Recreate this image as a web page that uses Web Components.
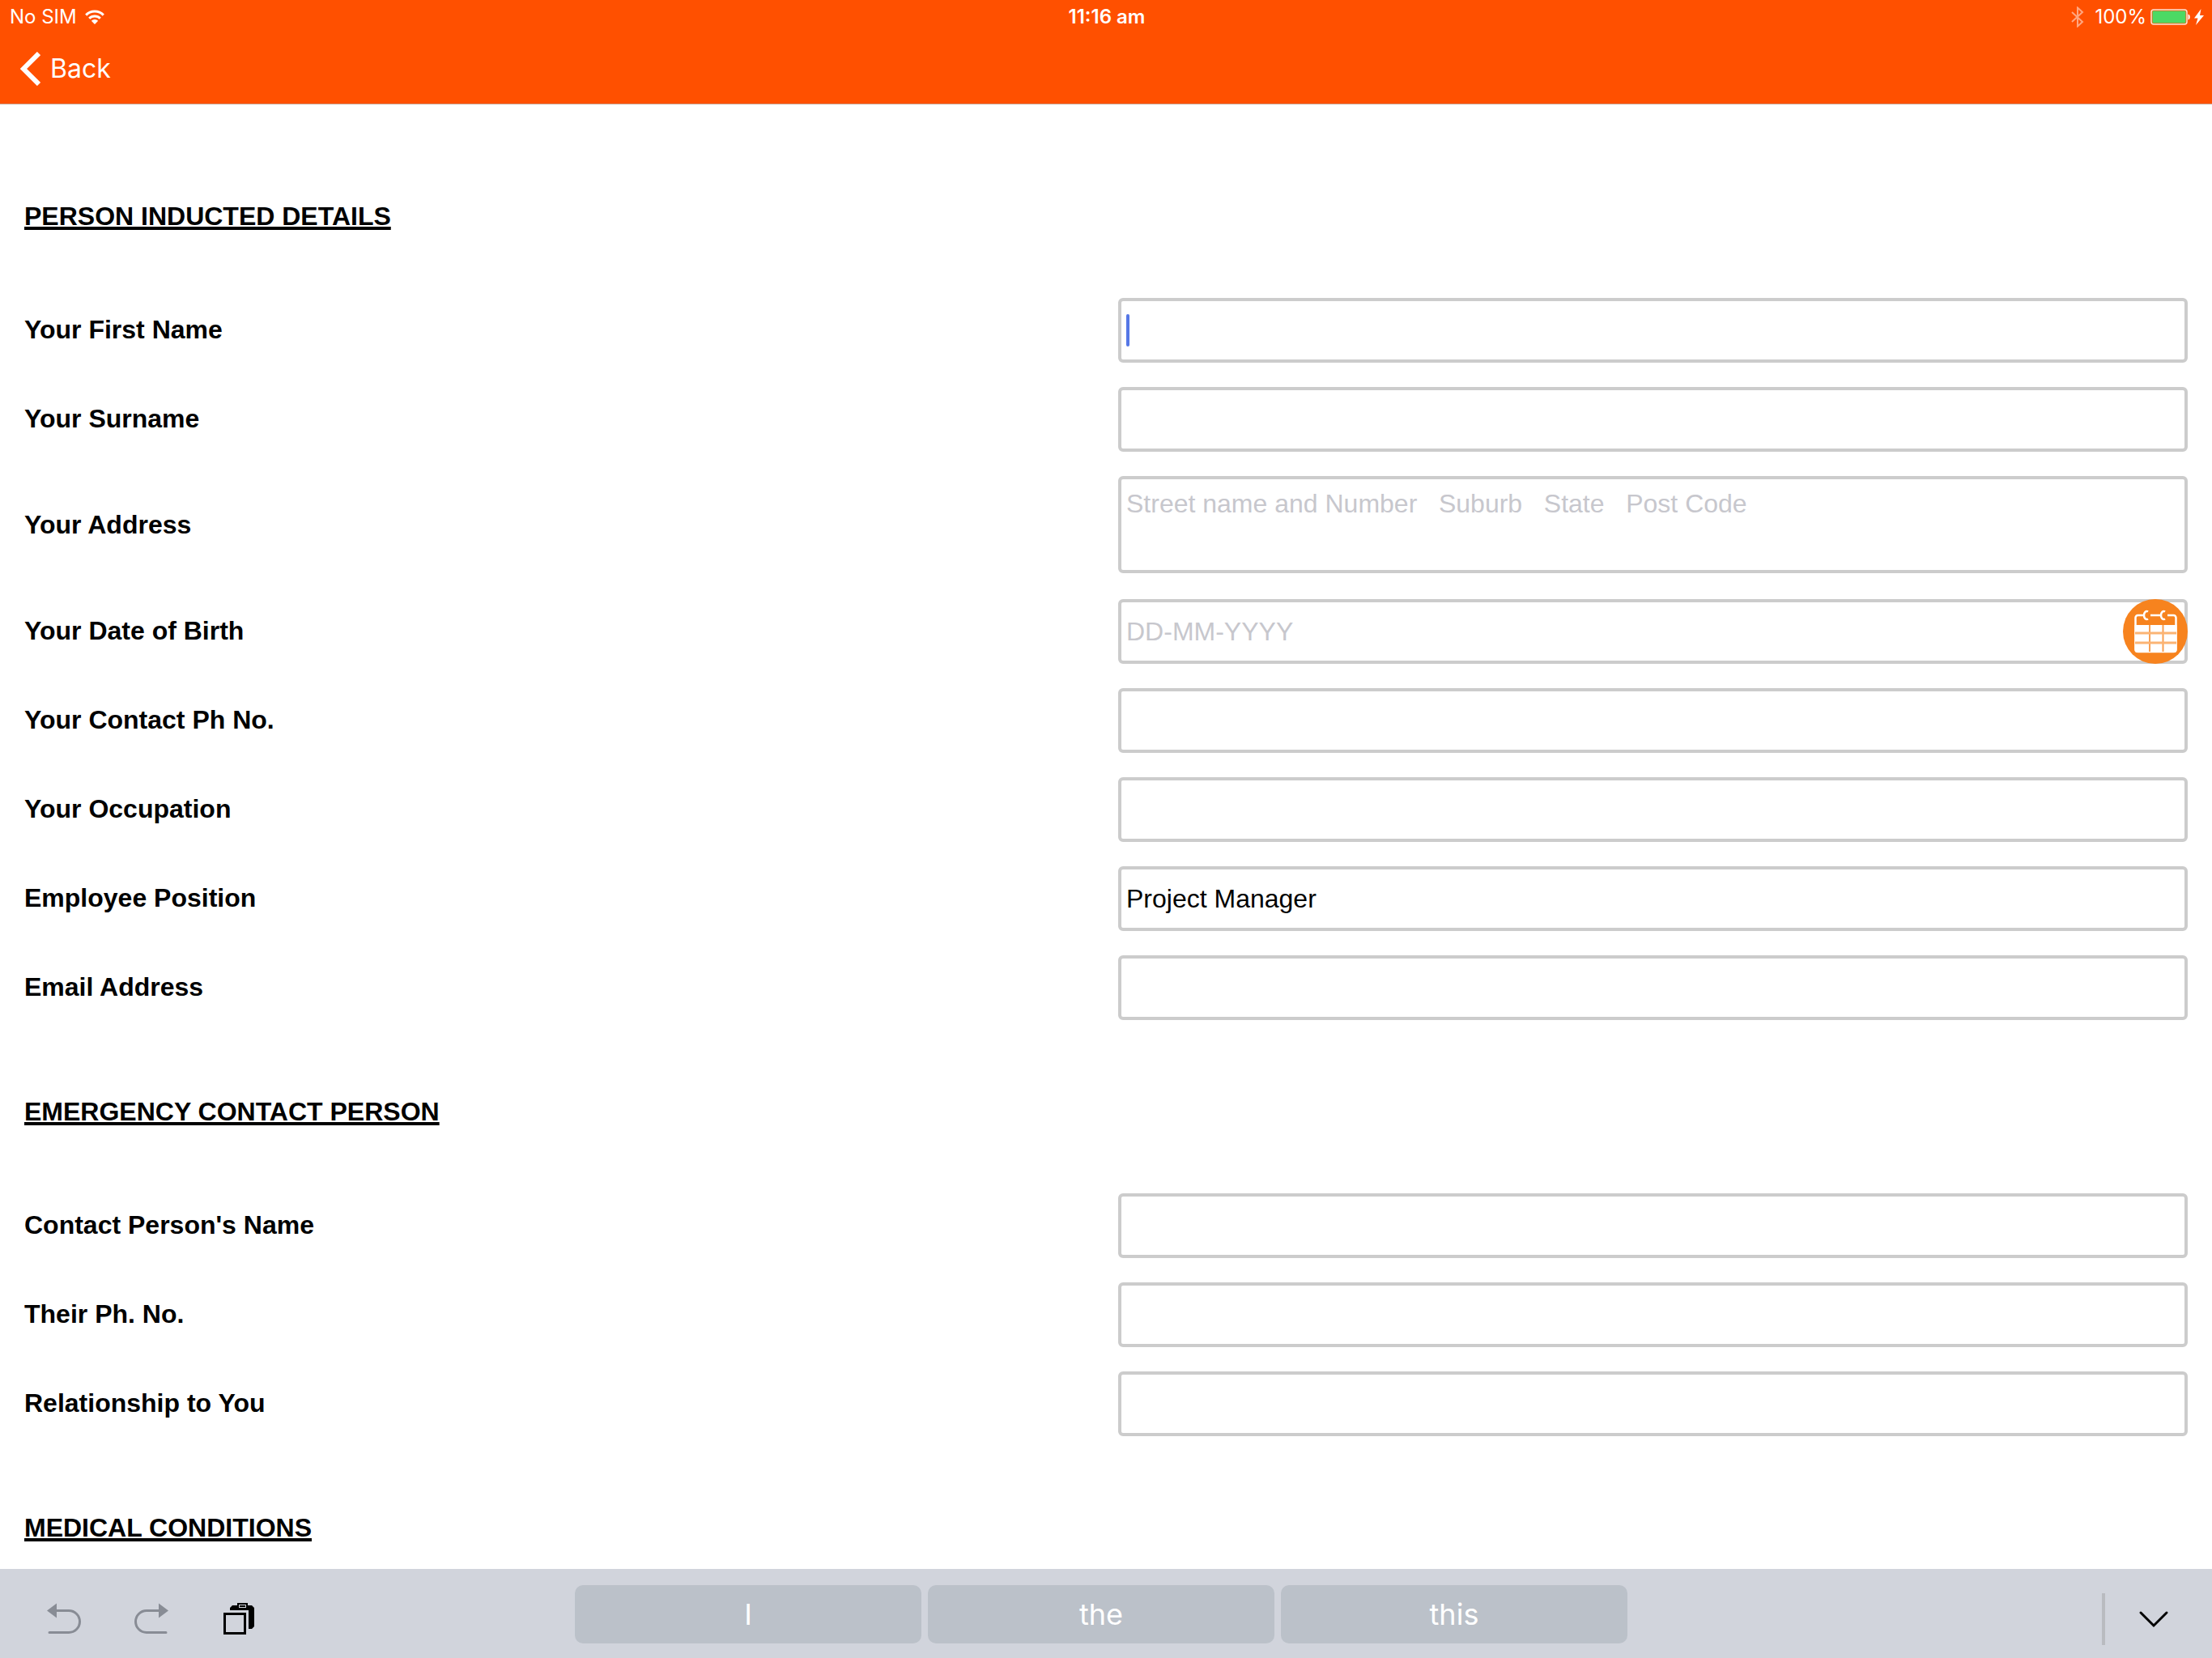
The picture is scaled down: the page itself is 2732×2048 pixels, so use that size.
<!DOCTYPE html>
<html lang="en">
<head>
<meta charset="utf-8">
<meta name="viewport" content="width=device-width, initial-scale=1">
<title>Person Inducted Details</title>
<style>
  html, body { margin: 0; height: 100%; background: #fff; }
  body { font-family: "Liberation Sans", Arial, sans-serif; font-size: 32px; color: #000; }
</style>
</head>
<body>
<induction-page>
  <status-bar slot="header" carrier="No SIM" time="11:16 am" battery="100%"></status-bar>
  <nav-bar slot="header">Back</nav-bar>
  <form-section heading="PERSON INDUCTED DETAILS">
    <form-field label="Your First Name" active></form-field>
    <form-field label="Your Surname"></form-field>
    <form-field label="Your Address" type="textarea" placeholder="Street name and Number   Suburb   State   Post Code"></form-field>
    <form-field label="Your Date of Birth" type="date" placeholder="DD-MM-YYYY"></form-field>
    <form-field label="Your Contact Ph No."></form-field>
    <form-field label="Your Occupation"></form-field>
    <form-field label="Employee Position" type="select" value="Project Manager"></form-field>
    <form-field label="Email Address"></form-field>
  </form-section>
  <form-section heading="EMERGENCY CONTACT PERSON">
    <form-field label="Contact Person's Name"></form-field>
    <form-field label="Their Ph. No."></form-field>
    <form-field label="Relationship to You"></form-field>
  </form-section>
  <form-section heading="MEDICAL CONDITIONS"></form-section>
  <keyboard-bar slot="footer">
    <word-suggestion>I</word-suggestion>
    <word-suggestion>the</word-suggestion>
    <word-suggestion>this</word-suggestion>
  </keyboard-bar>
</induction-page>

<script>
class BaseElement extends HTMLElement {
  connectedCallback() {
    if (this.shadowRoot) return;
    this.attachShadow({ mode: "open" }).innerHTML =
      `<style>:host,*{box-sizing:border-box}svg{display:block;flex:none}</style>` + this.render();
  }
  attr(name) { return this.getAttribute(name) || ""; }
}

customElements.define("induction-page", class extends BaseElement {
  render() {
    return `<style>
      :host { display: flex; flex-direction: column; height: 100vh; }
      header { flex: none; background: #ff5000; color: #fff; border-bottom: 1px solid #c9a595; font-family: Inter, sans-serif; }
      main { flex: 1; min-height: 0; overflow: auto; scrollbar-width: none; padding: 25px 15px 0; }
      footer { flex: none; }
    </style>
    <header><slot name="header"></slot></header>
    <main><slot></slot></main>
    <footer><slot name="footer"></slot></footer>`;
  }
});

customElements.define("status-bar", class extends BaseElement {
  render() {
    return `<style>
      :host { display: grid; grid-template-columns: 1fr auto 1fr; align-items: center; height: 42px; padding: 0 10px 0 12px; font-size: 24px; line-height: 40px; }
      div { display: flex; align-items: center; }
      .left { gap: 10px; }
      .time { font-weight: 600; }
      .right { justify-content: flex-end; gap: 5px; }
      .bt { margin-right: 8px; }
    </style>
    <div class="left"><span>${this.attr("carrier")}</span>
      <svg width="24" height="18" viewBox="0 0 24 18" fill="none" stroke="#fff" stroke-width="3">
        <path d="M1.2 6.6a15.2 15.2 0 0 1 21.6 0"/><path d="M5.2 10.8a9.6 9.6 0 0 1 13.6 0"/>
        <path d="M12 18l-4.2-4.3a6 6 0 0 1 8.4 0z" fill="#fff" stroke="none"/>
      </svg></div>
    <span class="time">${this.attr("time")}</span>
    <div class="right">
      <svg class="bt" width="16" height="26" viewBox="0 0 16 26" fill="none" stroke="#ffa680" stroke-width="2"><path d="M1 7l13 12-6 5.500V1.500L14 7 1 19"/></svg>
      <span>${this.attr("battery")}</span>
      <svg width="49" height="20" viewBox="0 0 49 20"><rect x="1" y="1" width="44" height="18" rx="3" fill="none" stroke="#ffe4d6" stroke-width="1.500"/><rect x="2.500" y="2.500" width="41" height="15" rx="1" fill="#4cd964"/><path d="M46.500 6.500c3 .5 3 6.500 0 7z" fill="#fff"/></svg>
      <svg width="12" height="20" viewBox="0 0 12 20"><path d="M8.500 0L0 11.500h4.500L2 20 12 8H7z" fill="#fff"/></svg>
    </div>`;
  }
});

customElements.define("nav-bar", class extends BaseElement {
  render() {
    return `<style>
      :host { display: flex; align-items: center; height: 86px; padding: 0 24px; }
      button { display: flex; align-items: center; gap: 12px; padding: 0; border: 0; background: none; color: inherit; font: 32px/44px Inter, sans-serif; }
    </style>
    <button type="button"><svg width="26" height="42" viewBox="0 0 26 42" fill="none" stroke="#fff" stroke-width="6"><path d="M24 2L5 21l19 19"/></svg><span><slot></slot></span></button>`;
  }
});

customElements.define("form-section", class extends BaseElement {
  render() {
    return `<style>
      :host { display: block; padding-top: 93px; }
      h2 { margin: 0 15px 81px; font-size: 32px; line-height: 40px; font-weight: bold; text-decoration: underline; text-decoration-thickness: 4px; text-underline-offset: 2px; text-decoration-skip-ink: none; }
      .rows { display: flex; flex-direction: column; gap: 30px; }
    </style>
    <h2>${this.attr("heading")}</h2><div class="rows"><slot></slot></div>`;
  }
});

customElements.define("form-field", class extends BaseElement {
  control() {
    const hint = `placeholder="${this.attr("placeholder")}"`;
    switch (this.attr("type")) {
      case "textarea": return `<textarea id="control" ${hint}></textarea>`;
      case "select": return `<select id="control"><option>${this.attr("value")}</option></select>`;
      case "date": return `<input id="control" type="text" ${hint}>
        <button type="button" aria-label="Choose date"><svg width="80" height="80" viewBox="0 0 80 80">
          <circle cx="40" cy="40" r="40" fill="#f7831e"/>
          <rect x="15.500" y="20" width="50" height="45" rx="3" fill="none" stroke="#fff" stroke-width="2.500"/>
          <path d="M14.500 32h52v31a3 3 0 0 1-3 3h-46a3 3 0 0 1-3-3z" fill="#fff"/>
          <path d="M33 32v33M49.500 32v33" stroke="#f9a052" stroke-width="2"/>
          <path d="M15 42h51M15 54h51" stroke="#fbb474" stroke-width="3"/>
          <path d="M27 20h7M48 20h7" stroke="#f7831e" stroke-width="5"/>
          <path d="M31 15.500a3.500 5 0 1 0 0 9M52 15.500a3.500 5 0 1 0 0 9" fill="none" stroke="#fff" stroke-width="2.500"/>
        </svg></button>`;
      default: return `<input id="control" type="text">${this.hasAttribute("active") ? '<span class="caret"></span>' : ""}`;
    }
  }
  render() {
    return `<style>
      :host { display: grid; grid-template-columns: 1fr 1fr; align-items: center; }
      :host([type="textarea"]) .control { padding-bottom: 2px; }
      label { padding: 0 15px 2px; font-weight: bold; line-height: 40px; }
      .control { position: relative; display: flex; margin: 0 15px; }
      input, textarea, select { flex: 1; min-width: 0; height: 80px; margin: 0; padding: 0 6px; border: 4px solid #ccc; border-radius: 6px; background: #fff; color: #000; font: inherit; appearance: none; outline: 0; resize: none; }
      textarea { height: 120px; padding: 12px 6px; }
      ::placeholder { color: #c7c7cd; opacity: 1; }
      button { position: absolute; right: 0; top: 0; padding: 0; border: 0; background: none; border-radius: 50%; }
      .caret { position: absolute; left: 10px; top: 20px; width: 4px; height: 40px; border-radius: 2px; background: #5577e6; }
    </style>
    <label for="control">${this.attr("label")}</label><div class="control">${this.control()}</div>`;
  }
});

customElements.define("word-suggestion", class extends BaseElement {
  render() {
    return `<style>
      :host { display: flex; flex: 1; }
      button { flex: 1; height: 72px; padding: 0; border: 0; border-radius: 10px; background: #bbc1c9; color: #fff; font: 36px/72px Inter, sans-serif; }
    </style><button type="button"><slot></slot></button>`;
  }
});

customElements.define("keyboard-bar", class extends BaseElement {
  render() {
    return `<style>
      :host { display: grid; grid-template-columns: 1fr 1300px 1fr; height: 110px; padding: 20px 12px 16px 0; background: #d1d4dc; }
      .tools { display: flex; align-items: center; gap: 64px; padding: 8px 0 0 58px; }
      .words { display: flex; gap: 8px; align-items: flex-start; }
      .hide { display: flex; align-items: center; justify-content: flex-end; gap: 41px; padding: 10px 41px 0 0; }
      .rule { width: 4px; height: 64px; background: #b9bbc0; }
      button { padding: 0; border: 0; background: none; color: #888c95; }
    </style>
    <div class="tools">
      <button type="button" aria-label="Undo"><svg width="44" height="40" viewBox="0 0 44 40"><path d="M10 10.500h17a13.500 13.500 0 0 1 0 27H3" fill="none" stroke="currentColor" stroke-width="3" stroke-linecap="round"/><path d="M0 10.500L12 1.500v18z" fill="currentColor"/></svg></button>
      <button type="button" aria-label="Redo"><svg width="44" height="40" viewBox="0 0 44 40"><path d="M32 10.500H15a13.500 13.500 0 0 0 0 27h24" fill="none" stroke="currentColor" stroke-width="3" stroke-linecap="round"/><path d="M42 10.500L30 1.500v18z" fill="currentColor"/></svg></button>
      <button type="button" aria-label="Paste"><svg width="44" height="40" viewBox="-2 -1 44 40"><path d="M8 9V6l3-3h6V0h13v3h5l3 3v23l-3 3h-4V9z" fill="#000"/><rect x="19.500" y="2.500" width="8" height="3" fill="none" stroke="#d1d4dc"/><rect x="1.500" y="13.500" width="25" height="24" fill="#d1d4dc" stroke="#000" stroke-width="3"/></svg></button>
    </div>
    <div class="words"><slot></slot></div>
    <div class="hide"><span class="rule"></span>
      <button type="button" aria-label="Hide keyboard"><svg width="38" height="22" viewBox="0 0 38 22" fill="none" stroke="#000" stroke-width="3" stroke-linecap="round"><path d="M3 3l16 16L35 3"/></svg></button></div>`;
  }
});
</script>
</body>
</html>
